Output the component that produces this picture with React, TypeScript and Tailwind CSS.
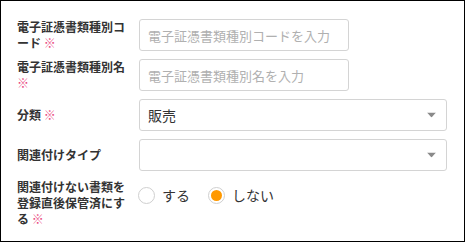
const Req = () => (
  <>
    {" "}
    <span className="font-normal text-[#ea4a7f]">※</span>
  </>
)

const Arrow = () => (
  <svg className="absolute right-[10px] top-1/2 -translate-y-1/2" width="9" height="5" viewBox="0 0 9 5">
    <path d="M0 0h9L4.5 5z" fill="#8a8a8a" />
  </svg>
)

const Radio = ({ label, checked }: { label: string; checked?: boolean }) => (
  <label className="flex items-center">
    <span className="w-[17px] h-[17px] rounded-full border border-[#cfcfcf] flex items-center justify-center bg-white">
      {checked && <span className="w-[11px] h-[11px] rounded-full bg-[#ff9900]" />}
    </span>
    <span className="ml-[7px] text-[14px] text-[#333]">{label}</span>
  </label>
)

export default function App() {
  return (
    <div
      className="w-[465px] h-[242px] border border-black bg-white pt-[18px] pl-4"
      style={{ fontFamily: '"Noto Sans CJK JP", "Noto Sans", sans-serif' }}
    >
      <div className="flex flex-col gap-2">
        <div className="flex items-center h-8">
          <div className="w-[122px] pr-[10px] text-[12px] leading-4 font-bold text-[#333]">
            電子証憑書類種別コード
            <Req />
          </div>
          <input
            className="w-[210px] h-8 border border-[#d4d4d4] rounded-[3px] px-2 text-[13px] placeholder:text-[#b0b0b0] outline-none"
            placeholder="電子証憑書類種別コードを入力"
          />
        </div>
        <div className="flex items-center h-8">
          <div className="w-[122px] pr-[10px] text-[12px] leading-4 font-bold text-[#333]">
            電子証憑書類種別名
            <Req />
          </div>
          <input
            className="w-[210px] h-8 border border-[#d4d4d4] rounded-[3px] px-2 text-[13px] placeholder:text-[#b0b0b0] outline-none"
            placeholder="電子証憑書類種別名を入力"
          />
        </div>
        <div className="flex items-center h-8">
          <div className="w-[122px] pr-[10px] text-[12px] leading-4 font-bold text-[#333]">
            分類
            <Req />
          </div>
          <div className="relative w-[308px] h-8 border border-[#d4d4d4] rounded-[3px] px-2 flex items-center text-[14px] text-[#333]">
            販売
            <Arrow />
          </div>
        </div>
        <div className="flex items-center h-8">
          <div className="w-[122px] pr-[10px] text-[12px] leading-4 font-bold text-[#333]">
            関連付けタイプ
          </div>
          <div className="relative w-[308px] h-8 border border-[#d4d4d4] rounded-[3px] px-2 flex items-center">
            <Arrow />
          </div>
        </div>
        <div className="flex items-start">
          <div className="w-[122px] pr-[10px] text-[12px] leading-4 font-bold text-[#333]">
            関連付けない書類を登録直後保管済にする
            <Req />
          </div>
          <div className="h-8 flex items-center gap-[18px] -ml-[1px]">
            <Radio label="する" />
            <Radio label="しない" checked />
          </div>
        </div>
      </div>
    </div>
  )
}
